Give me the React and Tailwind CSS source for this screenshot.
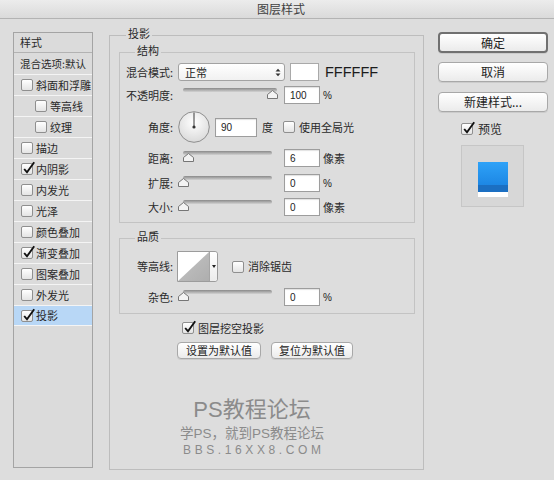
import React from "react";

const cjk = "font-['Noto_Sans_CJK_SC',sans-serif]";
const latin = "font-['Liberation_Sans',sans-serif]";

function Check({ checked }) {
  return (
    <span className="relative inline-block w-[12px] h-[12px] shrink-0 rounded-[2px] border border-[#8f8f8f] bg-gradient-to-b from-white to-[#e4e4e4]">
      {checked && (
        <svg className="absolute left-[0px] top-[-3px]" width="14" height="14" viewBox="0 0 14 14">
          <path d="M2.2 8 L5 11.3 L12.2 1.2" fill="none" stroke="#111" strokeWidth="1.9" strokeLinejoin="miter" />
        </svg>
      )}
    </span>
  );
}

function Num({ v, size = "w-[36px] h-[18px]" }) {
  return (
    <div
      className={`${size} shrink-0 flex items-center pl-[5px] bg-white border border-[#9d9d9d] shadow-[inset_0_1px_1px_rgba(0,0,0,0.12)] text-[10px] text-[#222] ${latin}`}
    >
      {v}
    </div>
  );
}

function Thumb({ pos }) {
  return (
    <svg className={`absolute top-[4px] ${pos}`} width="11" height="9" viewBox="0 0 11 9">
      <path d="M0.5 8.5 V4.5 L5.5 0.5 L10.5 4.5 V8.5 Z" fill="#f3f3f3" stroke="#767676" />
    </svg>
  );
}

function Slider({ track, pos }) {
  return (
    <div className="relative w-[106px] h-[18px] ml-[2px] shrink-0">
      <div
        className={`absolute left-[5px] top-[2px] h-[4px] rounded-full bg-gradient-to-b from-[#8a8a8a] to-[#d2d2d2] ${track}`}
      />
      <Thumb pos={pos} />
    </div>
  );
}

function Label({ children }) {
  return (
    <span className="w-[56px] shrink-0 pr-[3px] text-right text-[11px] leading-[13px] text-[#2a2a2a] whitespace-nowrap">
      {children}
    </span>
  );
}

function Btn({ children, cls }) {
  return (
    <div
      className={`flex items-center justify-center rounded-[4px] bg-gradient-to-b from-white to-[#ebebeb] shadow-[0_1px_0_rgba(0,0,0,0.08)] text-[#222] ${cls}`}
    >
      {children}
    </div>
  );
}

const items = [
  { t: "斜面和浮雕", c: false, ind: false },
  { t: "等高线", c: false, ind: true },
  { t: "纹理", c: false, ind: true },
  { t: "描边", c: false, ind: false },
  { t: "内阴影", c: true, ind: false },
  { t: "内发光", c: false, ind: false },
  { t: "光泽", c: false, ind: false },
  { t: "颜色叠加", c: false, ind: false },
  { t: "渐变叠加", c: true, ind: false },
  { t: "图案叠加", c: false, ind: false },
  { t: "外发光", c: false, ind: false },
  { t: "投影", c: true, ind: false, sel: true },
];

export default function App() {
  return (
    <div className={`w-[554px] h-[480px] bg-[#dddddd] overflow-hidden ${cjk}`}>
      <div className="h-[19px] border-b border-[#b3b3b3] bg-gradient-to-b from-[#ececec] to-[#dadada] flex items-center justify-center pl-[8px] text-[12px] leading-[14px] text-[#404040]">
        图层样式
      </div>

      <div className="flex items-start pl-[13px] pt-[8px]">
        {/* left style list */}
        <div className="mt-[5px] w-[80px] h-[436px] border border-[#a4a4a4] bg-[#dbdbdb] flex flex-col">
          <div className="h-[20px] border-b border-[#b2b2b2] flex items-center pl-[6px] text-[11px] text-[#2a2a2a]">样式</div>
          <div className="h-[21px] flex items-center pl-[6px] text-[10.5px] text-[#2a2a2a] whitespace-nowrap">混合选项:默认</div>
          {items.map((it) => (
            <div
              key={it.t}
              className={`h-[21px] border-t border-[#f4f4f4] flex items-center text-[11px] text-[#2a2a2a] ${it.ind ? "pl-[21px]" : "pl-[7px]"} ${it.sel ? "bg-[#b8d7f6] border-b" : ""}`}
            >
              <Check checked={it.c} />
              <span className="ml-[3px] whitespace-nowrap">{it.t}</span>
            </div>
          ))}
        </div>

        {/* main group */}
        <fieldset className="ml-[16px] w-[315px] h-[443px] border border-[#bdbdbd] p-0 m-0 min-w-0">
          <legend className="ml-[16px] px-[2px] h-[17px] pb-[4px] text-[11px] leading-[13px] text-[#2a2a2a]">投影</legend>

          <fieldset className="ml-[9px] w-[296px] border border-[#c3c3c3] p-0 m-0 pb-[6px] min-w-0">
            <legend className="ml-[15px] px-[2px] h-[17px] pb-[4px] text-[11px] leading-[13px] text-[#2a2a2a]">结构</legend>

            <div className="mt-[2px] h-[18px] flex items-center">
              <Label>混合模式:</Label>
              <div className="ml-[2px] w-[107px] h-[18px] rounded-[3px] border border-[#a2a2a2] bg-gradient-to-b from-white to-[#f1f1f1] flex items-center pl-[6px] pr-[3px] text-[11px] text-[#222]">
                <span className="flex-1">正常</span>
                <svg width="6" height="9" viewBox="0 0 6 9">
                  <path d="M0.5 3.5 L3 0.8 L5.5 3.5 Z" fill="#333" />
                  <path d="M0.5 5.5 L3 8.2 L5.5 5.5 Z" fill="#333" />
                </svg>
              </div>
              <div className="ml-[5px] w-[29px] h-[18px] bg-white border border-[#a9a9a9]" />
              <span className={`ml-[6px] text-[14.5px] leading-[18px] text-[#1c1c1c] ${latin}`}>FFFFFF</span>
            </div>

            <div className="mt-[5px] h-[18px] flex items-center">
              <Label>不透明度:</Label>
              <Slider track="w-[94px]" pos="left-[89px]" />
              <Num v="100" />
              <span className={`ml-[3px] text-[10px] text-[#222] ${latin}`}>%</span>
            </div>

            <div className="mt-[7px] h-[32px] flex items-center">
              <Label>角度:</Label>
              <svg className="ml-[2px] shrink-0" width="32" height="32" viewBox="0 0 32 32">
                <defs>
                  <radialGradient id="dg" cx="50%" cy="35%" r="65%">
                    <stop offset="0" stopColor="#ffffff" />
                    <stop offset="1" stopColor="#dadada" />
                  </radialGradient>
                </defs>
                <circle cx="16" cy="16" r="15.3" fill="url(#dg)" stroke="#8e8e8e" />
                <line x1="16" y1="16" x2="16" y2="1.5" stroke="#3a3a3a" strokeWidth="1" />
                <circle cx="16" cy="16" r="1.6" fill="#333" />
              </svg>
              <div className="ml-[5px]">
                <Num v="90" size="w-[42px] h-[19px]" />
              </div>
              <span className="ml-[5px] text-[11px] text-[#2a2a2a]">度</span>
              <span className="ml-[10px] flex items-center">
                <Check checked={false} />
              </span>
              <span className="ml-[4px] text-[11px] text-[#2a2a2a] whitespace-nowrap">使用全局光</span>
            </div>

            <div className="mt-[6px] h-[18px] flex items-center">
              <Label>距离:</Label>
              <Slider track="w-[89px]" pos="left-[5px]" />
              <Num v="6" />
              <span className="ml-[3px] text-[11px] text-[#2a2a2a]">像素</span>
            </div>

            <div className="mt-[7px] h-[18px] flex items-center">
              <Label>扩展:</Label>
              <Slider track="w-[89px]" pos="left-[0px]" />
              <Num v="0" />
              <span className={`ml-[3px] text-[10px] text-[#222] ${latin}`}>%</span>
            </div>

            <div className="mt-[6px] h-[18px] flex items-center">
              <Label>大小:</Label>
              <Slider track="w-[89px]" pos="left-[0px]" />
              <Num v="0" />
              <span className="ml-[3px] text-[11px] text-[#2a2a2a]">像素</span>
            </div>
          </fieldset>

          <fieldset className="mt-[7px] ml-[9px] w-[296px] border border-[#c3c3c3] p-0 pb-[7px] min-w-0">
            <legend className="ml-[15px] px-[2px] h-[17px] pb-[4px] text-[11px] leading-[13px] text-[#2a2a2a]">品质</legend>

            <div className="mt-[4px] h-[31px] flex items-center">
              <Label>等高线:</Label>
              <div className="ml-[1px] h-[31px] flex border border-[#9c9c9c] rounded-r-[3px] bg-white">
                <svg width="31" height="29" viewBox="0 0 31 29" className="block">
                  <defs>
                    <linearGradient id="cg" x1="0" y1="0" x2="1" y2="1">
                      <stop offset="0" stopColor="#c4c4c4" />
                      <stop offset="1" stopColor="#aeaeae" />
                    </linearGradient>
                  </defs>
                  <rect width="31" height="29" fill="#ffffff" />
                  <polygon points="0,29 31,0 31,29" fill="url(#cg)" />
                </svg>
                <div className="w-[8px] border-l border-[#a5a5a5] bg-gradient-to-b from-white to-[#ececec] flex items-center justify-center rounded-r-[3px]">
                  <svg width="4" height="3" viewBox="0 0 4 3">
                    <path d="M0 0 H4 L2 3 Z" fill="#222" />
                  </svg>
                </div>
              </div>
              <span className="ml-[14px] flex items-center">
                <Check checked={false} />
              </span>
              <span className="ml-[4px] text-[11px] text-[#2a2a2a] whitespace-nowrap">消除锯齿</span>
            </div>

            <div className="mt-[6px] h-[18px] flex items-center">
              <Label>杂色:</Label>
              <Slider track="w-[89px]" pos="left-[0px]" />
              <Num v="0" />
              <span className={`ml-[3px] text-[10px] text-[#222] ${latin}`}>%</span>
            </div>
          </fieldset>

          <div className="mt-[8px] ml-[72px] h-[12px] flex items-center">
            <Check checked={true} />
            <span className="ml-[4px] text-[11px] text-[#2a2a2a] whitespace-nowrap">图层挖空投影</span>
          </div>

          <div className="mt-[8px] ml-[67px] flex">
            <Btn cls="w-[84px] h-[17px] border border-[#a8a8a8] text-[11px]">设置为默认值</Btn>
            <Btn cls="ml-[10px] w-[82px] h-[17px] border border-[#a8a8a8] text-[11px]">复位为默认值</Btn>
          </div>

          <div className="mt-[35px] pr-[29px] flex flex-col items-center text-[#8b8b8b]">
            <div className="text-[22px] leading-[26px]">
              <span className={latin}>PS</span>教程论坛
            </div>
            <div className="mt-[1px] text-[13.5px] leading-[16px] whitespace-nowrap">
              学<span className={latin}>PS</span>，就到<span className={latin}>PS</span>教程论坛
            </div>
            <div className={`mt-[1px] pl-[3.6px] text-[12px] leading-[14px] tracking-[3.6px] ${latin}`}>BBS.16XX8.COM</div>
          </div>
        </fieldset>

        {/* right column */}
        <div className="mt-[5px] ml-[14px] w-[110px] flex flex-col">
          <Btn cls="h-[21px] border-2 border-[#707070] text-[12px]">确定</Btn>
          <Btn cls="mt-[9px] h-[20px] border border-[#a8a8a8] text-[12px]">取消</Btn>
          <Btn cls="mt-[10px] h-[20px] border border-[#a8a8a8] text-[12px]">新建样式...</Btn>
          <div className="mt-[11px] ml-[23px] h-[12px] flex items-center">
            <Check checked={true} />
            <span className="ml-[5px] text-[12px] text-[#2a2a2a]">预览</span>
          </div>
          <div className="mt-[10px] ml-[23px] w-[63px] h-[62px] border border-[#c6c6c6] bg-[#d7d7d7] flex flex-col items-center pt-[16px]">
            <div className="w-[30px] h-[23px] bg-gradient-to-b from-[#2ea2f8] to-[#1d87e4]" />
            <div className="w-[30px] h-[7px] bg-[#1b6fc2]" />
            <div className="w-[30px] h-[5px] bg-white" />
          </div>
        </div>
      </div>
    </div>
  );
}
